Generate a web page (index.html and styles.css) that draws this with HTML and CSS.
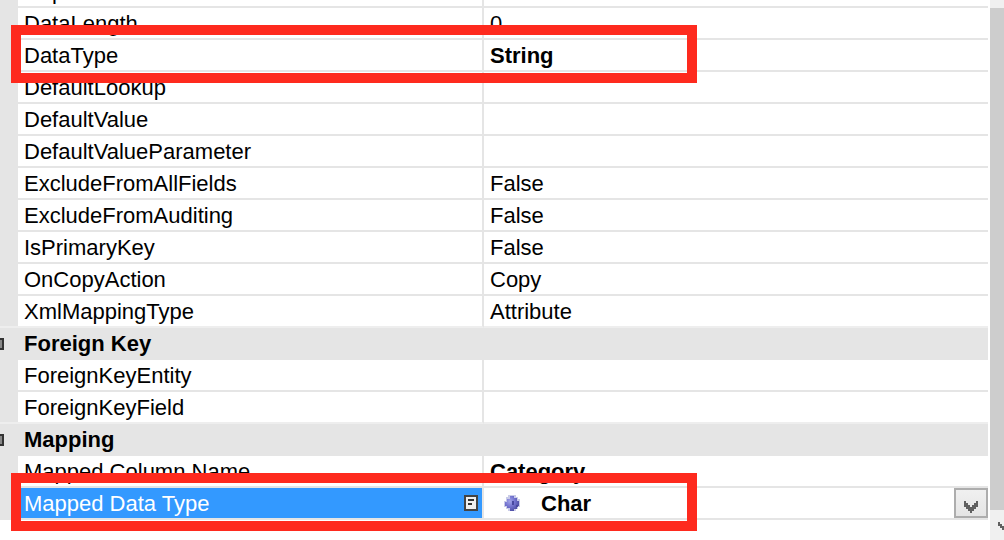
FILE: index.html
```html
<!DOCTYPE html>
<html lang="en">
<head>
<meta charset="utf-8">
<title>Properties</title>
<link rel="stylesheet" href="styles.css">
</head>
<body>
<main class="panel">
  <div class="viewport">
    <table class="grid">
      <colgroup><col class="col-gutter"><col class="col-name"><col></colgroup>
      <tbody>
        <tr><td class="gutter"></td><th class="name" scope="row">Caption</th><td class="value"></td></tr>
        <tr><td class="gutter"></td><th class="name" scope="row">DataLength</th><td class="value">0</td></tr>
        <tr><td class="gutter"></td><th class="name" scope="row">DataType<span class="callout"></span></th><td class="value changed">String</td></tr>
        <tr><td class="gutter"></td><th class="name" scope="row">DefaultLookup</th><td class="value"></td></tr>
        <tr><td class="gutter"></td><th class="name" scope="row">DefaultValue</th><td class="value"></td></tr>
        <tr><td class="gutter"></td><th class="name" scope="row">DefaultValueParameter</th><td class="value"></td></tr>
        <tr><td class="gutter"></td><th class="name" scope="row">ExcludeFromAllFields</th><td class="value">False</td></tr>
        <tr><td class="gutter"></td><th class="name" scope="row">ExcludeFromAuditing</th><td class="value">False</td></tr>
        <tr><td class="gutter"></td><th class="name" scope="row">IsPrimaryKey</th><td class="value">False</td></tr>
        <tr><td class="gutter"></td><th class="name" scope="row">OnCopyAction</th><td class="value">Copy</td></tr>
        <tr class="before-group"><td class="gutter"></td><th class="name" scope="row">XmlMappingType</th><td class="value">Attribute</td></tr>
        <tr class="group"><td class="gutter"><button class="toggle" type="button" aria-label="Collapse Foreign Key"></button></td><th class="title" colspan="2" scope="colgroup">Foreign Key</th></tr>
        <tr><td class="gutter"></td><th class="name" scope="row">ForeignKeyEntity</th><td class="value"></td></tr>
        <tr class="before-group"><td class="gutter"></td><th class="name" scope="row">ForeignKeyField</th><td class="value"></td></tr>
        <tr class="group"><td class="gutter"><button class="toggle" type="button" aria-label="Collapse Mapping"></button></td><th class="title" colspan="2" scope="colgroup">Mapping</th></tr>
        <tr><td class="gutter"></td><th class="name" scope="row">Mapped Column Name</th><td class="value changed">Category</td></tr>
        <tr>
          <td class="gutter"></td>
          <th class="name selected" scope="row">
            <div class="name-line">
              <label for="mapped-type">Mapped Data Type</label>
              <svg class="note" width="14" height="16" viewBox="0 0 14 16" aria-hidden="true"><path fill="#444" d="M0 0h14v16H0z"/><path fill="#f0f0f0" d="M2 2h10v12H2z"/><path fill="#333" d="M4 4h6v2H4zM4 8h4v2H4z"/></svg>
            </div>
            <span class="callout"></span>
          </th>
          <td class="value changed editing">
            <div class="editor">
              <svg class="bullet" width="16" height="16" viewBox="0 0 16 16" aria-hidden="true"><defs><radialGradient id="orb" cx=".35" cy=".35" r=".65"><stop offset="0" stop-color="#a3a5e8"/><stop offset=".55" stop-color="#7373cf"/><stop offset="1" stop-color="#5252a8"/></radialGradient></defs><path fill="#c9cbe8" d="M4 0h8v2h2v2h2v8h-2v2h-2v2H4v-2H2v-2H0V6h2V2h2z"/><path fill="url(#orb)" d="M6 1h4v2h3v3h2v5h-2v3h-3v2H6v-3H3v-2H1V7h2V4h3z"/><path fill="#4848a0" d="M8 6h2v4H8zM12 10h2v2h-2z"/></svg>
              <select id="mapped-type" class="picker"><option>Char</option></select>
              <span class="drop"><svg width="14" height="12" viewBox="0 0 14 12" aria-hidden="true"><path fill="#606060" d="M0 0h2v2h2v2h2v2h2V4h2V2h2V0h2v6h-2v2h-2v2H8v2H6v-2H4V8H2V6H0z"/></svg></span>
            </div>
          </td>
        </tr>
      </tbody>
    </table>
  </div>
  <div class="scrollbar">
    <div class="thumb"></div>
    <button class="scroll-down" type="button" aria-label="Scroll down"><svg width="14" height="12" viewBox="0 0 14 12" aria-hidden="true"><path fill="#606060" d="M0 0h2v2h2v2h2v2h2V4h2V2h2V0h2v4h-2v2h-2v2H8v2H6V8H4V6H2V4H0z"/></svg></button>
  </div>
</main>
</body>
</html>
```
FILE: styles.css
```css
* { box-sizing: border-box; }
body {
  margin: 0;
  background: #fff;
  color: #000;
  font: 22px/28px "Liberation Sans", Arial, sans-serif;
}
.panel { display: flex; height: 100vh; overflow: hidden; }
.viewport { flex: 1; min-width: 0; padding-right: 2px; }
.grid {
  width: 100%;
  margin-top: -24px;
  table-layout: fixed;
  border-collapse: separate;
  border-spacing: 0;
}
.col-gutter { width: 18px; }
.col-name { width: 466px; }
.grid td, .grid th {
  height: 32px;
  padding: 2px 6px 0;
  text-align: left;
  white-space: nowrap;
  font-weight: 400;
}
.grid .gutter { padding: 0; background: #e5e5e5; }
.grid .name {
  position: relative;
  border-right: 2px solid #e5e5e5;
  border-bottom: 2px solid #e5e5e5;
}
.grid .value { border-bottom: 2px solid #e5e5e5; }
.grid .changed { font-weight: 700; }
.grid .before-group td, .grid .before-group th { border-bottom: 2px solid #eee; }
.grid .title { padding: 0 6px; background: #e5e5e5; font-weight: 700; }
.toggle {
  display: block;
  width: 12px;
  height: 12px;
  margin-left: -8px;
  padding: 0;
  border: 2px solid #333;
  background: #888;
}
.grid .selected {
  padding: 0 4px 0 6px;
  background: #39f;
  background-clip: padding-box;
  color: #fff;
}
.name-line { display: flex; align-items: center; justify-content: space-between; }
.name-line label { padding-top: 2px; }
.callout {
  position: absolute;
  z-index: 2;
  top: -15px;
  left: -7px;
  width: 686px;
  height: 58px;
  border: 10px solid #fe2a1e;
  pointer-events: none;
}
.grid .editing { padding: 0 0 0 20px; }
.editor { display: flex; align-items: center; height: 30px; position: relative; }
.picker {
  flex: 1;
  height: 30px;
  margin: 0;
  padding: 2px 40px 0 21px;
  border: 0;
  appearance: none;
  background: transparent;
  color: #000;
  font: inherit;
}
.drop {
  position: absolute;
  right: 0;
  top: 0;
  display: flex;
  align-items: center;
  justify-content: center;
  width: 34px;
  height: 30px;
  padding-top: 8px;
  border: 2px solid #adadad;
  background: linear-gradient(#f0f0f0, #e5e5e5);
  pointer-events: none;
}
.scrollbar {
  display: flex;
  flex-direction: column;
  width: 14px;
  padding-top: 8px;
  background: #f0f0f0;
  overflow: hidden;
}
.thumb { flex: 1; background: #cdcdcd; }
.scroll-down {
  height: 30px;
  padding: 6px 0 0 8px;
  border: 0;
  background: #f0f0f0;
  text-align: left;
}
.scroll-down svg { display: block; }
```
